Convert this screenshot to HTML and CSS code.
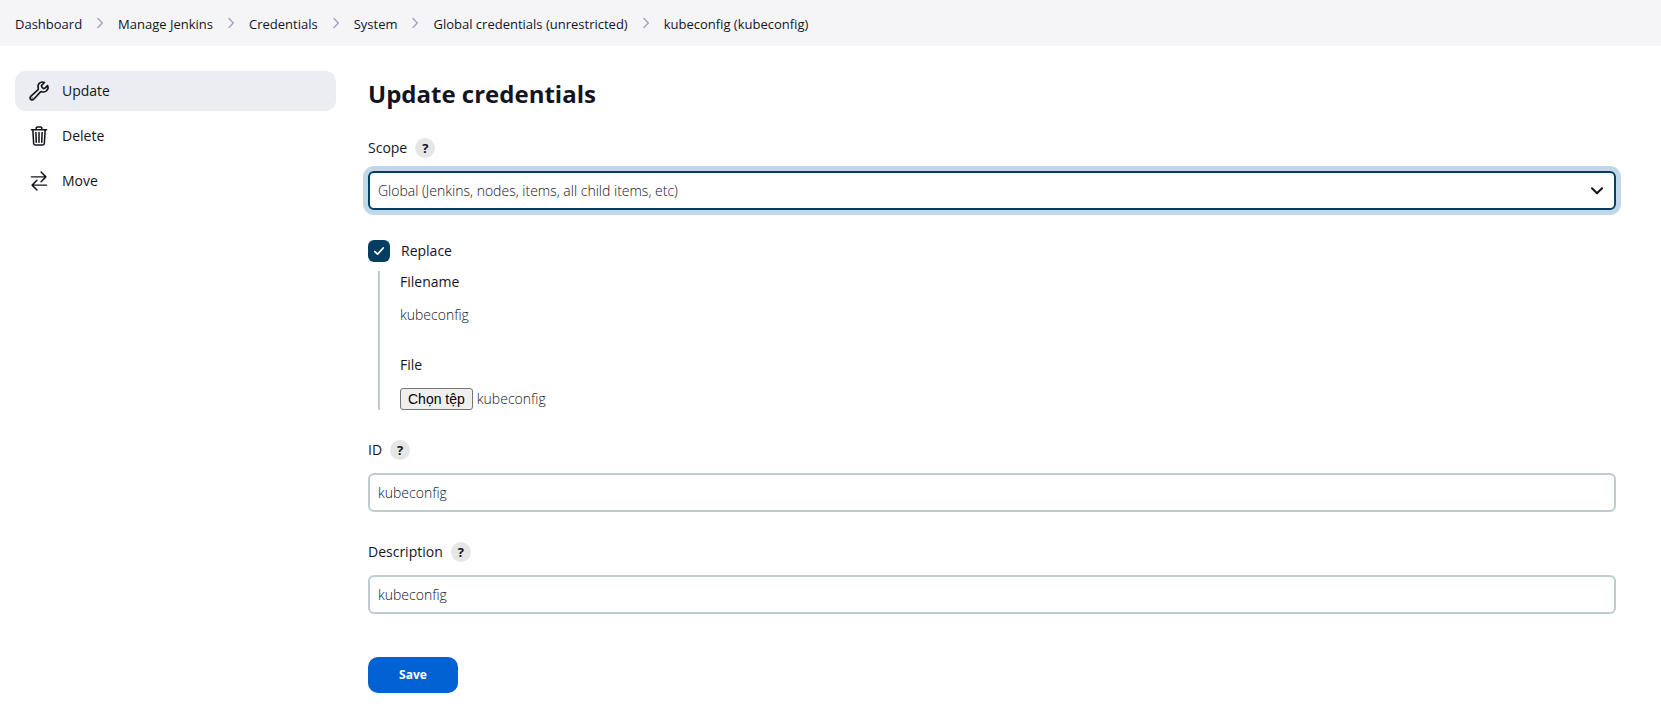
FILE: index.html
```html
<!DOCTYPE html>
<html lang="en">
<head>
<meta charset="utf-8">
<meta name="viewport" content="width=device-width, initial-scale=1">
<title>Update credentials</title>
<link rel="stylesheet" href="styles.css">
</head>
<body>
<svg class="sprite" aria-hidden="true">
  <symbol id="chevron" viewBox="0 0 6 12"><path d="M1 1.5 5.3 6 1 10.5" fill="none" stroke="currentColor" stroke-width="1.5" stroke-linecap="round" stroke-linejoin="round"/></symbol>
</svg>
<nav class="breadcrumbs" aria-label="Breadcrumb">
  <a href="#">Dashboard</a><svg class="chevron"><use href="#chevron"/></svg>
  <a href="#">Manage Jenkins</a><svg class="chevron"><use href="#chevron"/></svg>
  <a href="#">Credentials</a><svg class="chevron"><use href="#chevron"/></svg>
  <a href="#">System</a><svg class="chevron"><use href="#chevron"/></svg>
  <a href="#">Global credentials (unrestricted)</a><svg class="chevron"><use href="#chevron"/></svg>
  <a href="#">kubeconfig (kubeconfig)</a>
</nav>
<div class="page">
  <nav class="tasks" aria-label="Tasks">
    <a class="task task-active" href="#">
      <svg class="icon" viewBox="0 0 512 512"><path d="M393.87 190a32.1 32.1 0 01-45.25 0l-26.57-26.57a32.09 32.09 0 010-45.26L382.19 58a1 1 0 00-.3-1.64c-38.82-16.64-89.15-8.16-121.11 23.57-30.58 30.35-32.32 76-21.12 115.84a31.93 31.93 0 01-9.06 32.08L64 380a48.17 48.17 0 1068 68l153.86-167a31.93 31.93 0 0131.6-9.13c39.54 10.59 84.54 8.6 114.72-21.19 32.49-32 39.5-88.56 23.75-120.93a1 1 0 00-1.6-.26z" fill="none" stroke="currentColor" stroke-linecap="round" stroke-miterlimit="10" stroke-width="38"/><circle cx="96" cy="416" r="16" fill="currentColor"/></svg>
      Update</a>
    <a class="task" href="#">
      <svg class="icon" viewBox="0 0 512 512" fill="none" stroke="currentColor" stroke-width="36" stroke-linecap="round" stroke-linejoin="round"><path d="M112 112l20 320c.95 18.49 14.4 32 32 32h184c17.67 0 30.87-13.51 32-32l20-320M80 112h352M192 112V72a23.93 23.93 0 0124-24h80a23.93 23.93 0 0124 24v40M256 176v224M184 176l8 224M328 176l-8 224"/></svg>
      Delete</a>
    <a class="task" href="#">
      <svg class="icon" viewBox="0 0 512 512" fill="none" stroke="currentColor" stroke-width="34" stroke-linecap="round" stroke-linejoin="round"><path d="M304 48l112 112-112 112M398.87 160H80M208 464L96 352l112-112M114 352h318"/></svg>
      Move</a>
  </nav>
  <main class="content">
    <h1>Update credentials</h1>
    <form onsubmit="return false">
      <div class="field">
        <div class="field-head"><label for="scope">Scope</label><button class="help" type="button" aria-label="Help for Scope">?</button></div>
        <div class="select">
          <select class="control control-focused" id="scope"><option>Global (Jenkins, nodes, items, all child items, etc)</option><option>System (Jenkins and nodes only)</option></select>
          <svg class="select-arrow" viewBox="0 0 12 8"><path d="M1 1.2 6 6.2 11 1.2" fill="none" stroke="currentColor" stroke-width="2" stroke-linecap="round" stroke-linejoin="round"/></svg>
        </div>
      </div>
      <div class="field">
        <div class="check"><input type="checkbox" id="replace" checked><label for="replace">Replace</label>
          <svg class="check-mark" viewBox="0 0 22 22"><path d="M6.8 11.6 9.6 14.2 15.2 8" fill="none" stroke="#fff" stroke-width="1.7" stroke-linecap="round" stroke-linejoin="round"/></svg></div>
        <div class="nested">
          <div class="nested-title">Filename</div>
          <div class="filename">kubeconfig</div>
          <div class="nested-title"><label for="file">File</label></div>
          <div class="file-row">
            <input class="file-input" type="file" id="file" tabindex="-1">
            <button class="file-button" type="button" onclick="document.getElementById('file').click()">Chọn tệp</button>
            <span>kubeconfig</span>
          </div>
        </div>
      </div>
      <div class="field">
        <div class="field-head"><label for="id">ID</label><button class="help" type="button" aria-label="Help for ID">?</button></div>
        <input class="control" id="id" type="text" value="kubeconfig">
      </div>
      <div class="field">
        <div class="field-head"><label for="description">Description</label><button class="help" type="button" aria-label="Help for Description">?</button></div>
        <input class="control" id="description" type="text" value="kubeconfig">
      </div>
      <button class="save" type="submit">Save</button>
    </form>
  </main>
</div>
</body>
</html>
```
FILE: styles.css
```css
* { box-sizing: border-box; }
body {
  margin: 0;
  background: #fff;
  color: #14141f;
  font: 300 14px/20px "Open Sans", "Noto Sans", sans-serif;
}
a { color: inherit; text-decoration: none; }
button, input, select { font: inherit; color: inherit; }
.sprite { display: none; }

.breadcrumbs {
  display: flex;
  align-items: center;
  gap: 15px;
  height: 46px;
  padding: 2px 15px 0;
  background: #f5f5f8;
  font-size: 13px;
  font-weight: 500;
}
.chevron { width: 6px; height: 12px; margin-bottom: 2px; color: #a5a5bd; }

.page { display: flex; gap: 32px; padding: 25px 45px 20px 15px; }

.tasks { display: flex; flex-direction: column; gap: 5px; flex: none; width: 321px; }
.task {
  display: flex;
  align-items: center;
  gap: 12px;
  height: 40px;
  padding: 0 13px;
  border-radius: 10px;
  font-weight: 500;
}
.task-active { background: #ecedf3; }
.icon { width: 22px; height: 22px; }

.content { flex: 1; min-width: 0; }
h1 { margin: 7px 0 28px; font-size: 24px; line-height: 32px; font-weight: 700; }

.field { margin-bottom: 30px; }
.field-head { display: flex; align-items: center; gap: 8px; margin-bottom: 13px; font-weight: 500; }
.help {
  width: 20px;
  height: 20px;
  padding: 0;
  border: 0;
  border-radius: 50%;
  background: #e6e6e6;
  font-size: 13px;
  line-height: 20px;
  font-weight: 700;
}
.control {
  display: block;
  width: 100%;
  height: 39px;
  padding: 0 8px;
  border: 2px solid #c0cbd0;
  border-radius: 6px;
  background: #fff;
  outline: none;
  appearance: none;
}
.control-focused { border-color: #053e61; box-shadow: 0 0 0 5px #c0d8e8; }
.select { display: grid; align-items: center; }
.select > * { grid-area: 1 / 1; }
.select-arrow { width: 12px; height: 8px; margin-right: 13px; justify-self: end; pointer-events: none; }

.check { display: grid; grid-template-columns: 22px auto; gap: 11px; align-items: center; font-weight: 500; }
.check input { grid-area: 1 / 1; width: 22px; height: 22px; margin: 0; border-radius: 6px; background: #053e61; appearance: none; }
.check label { grid-area: 1 / 2; }
.check-mark { grid-area: 1 / 1; width: 22px; height: 22px; pointer-events: none; visibility: hidden; }
.check input:checked ~ .check-mark { visibility: visible; }

.nested { margin: 9px 0 0 10px; padding-left: 20px; border-left: 2px solid #c0cbd0; }
.nested-title { padding-top: 1px; margin-bottom: 13px; font-weight: 500; }
.filename { margin-bottom: 29px; }
.file-row { display: flex; align-items: center; gap: 4px; }
.file-input { position: absolute; width: 1px; height: 1px; opacity: 0; }
.file-button {
  height: 22px;
  padding: 0 7px;
  border: 1px solid #767676;
  border-radius: 3px;
  background: #efefef;
  color: #000;
  font: 14px/20px "Liberation Sans", Arial, sans-serif;
}

.save {
  width: 90px;
  height: 36px;
  margin-top: 13px;
  border: 0;
  border-radius: 10px;
  background: #0362d3;
  color: #fff;
  font-size: 12px;
  font-weight: 700;
}
```
